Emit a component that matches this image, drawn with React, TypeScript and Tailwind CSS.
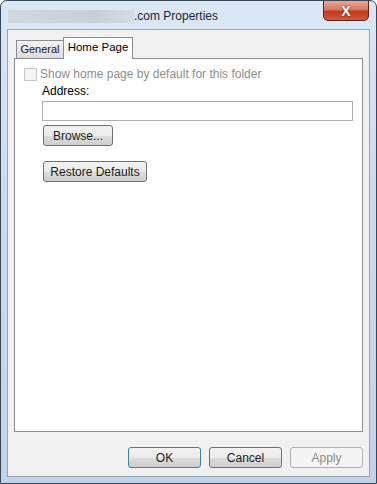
const font = { fontFamily: '"Liberation Sans", "Noto Sans", sans-serif' };

function Button({
  label,
  className,
  isDefault,
  disabled,
}: {
  label: string;
  className: string;
  isDefault?: boolean;
  disabled?: boolean;
}) {
  const border = disabled
    ? "border-[#adb2b5]"
    : isDefault
      ? "border-[#3c7fb1]"
      : "border-[#707070]";
  const fill = disabled
    ? "bg-[#f4f4f4] text-[#8d8d8d]"
    : "bg-[linear-gradient(#f2f2f2_0%,#ebebeb_50%,#dddddd_51%,#cfcfcf_100%)] text-[#1b1b1b]";
  return (
    <div
      className={`flex items-center justify-center rounded-[3px] border text-[12px] leading-none ${border} ${fill} ${className}`}
    >
      {label}
    </div>
  );
}

function Tabs() {
  return (
    <div className="flex h-[28px] items-end pl-[2px]">
      <div className="flex h-[18px] w-[47px] items-center justify-center border border-b-0 border-r-0 border-[#898c95] bg-[linear-gradient(#f2f2f2,#dcdcdc)] text-[11px] text-[#1b1b1b]">
        General
      </div>
      <div className="relative z-10 -mb-px flex h-[22px] w-[70px] items-center justify-center border border-b-0 border-[#898c95] bg-white pb-[2px] text-[11.5px] text-black">
        Home Page
      </div>
    </div>
  );
}

function HomePagePanel() {
  return (
    <div className="h-[374px] border border-[#898c95] bg-white pl-[9px] pt-[8px]">
      <div className="flex items-center gap-[3px] leading-[15px]">
        <div className="h-[13px] w-[13px] border border-[#c5c8cc] bg-[#f4f4f4]" />
        <span className="text-[12px] text-[#8d8d8d]">
          Show home page by default for this folder
        </span>
      </div>
      <div className="pl-[18px]">
        <div className="mt-[2px] text-[12px] leading-[15px] text-black">Address:</div>
        <div className="mt-[2px] h-[20px] w-[311px] border border-[#abadb3] bg-white" />
        <Button label="Browse..." className="mt-[4px] ml-px h-[21px] w-[70px]" />
        <Button label="Restore Defaults" className="mt-[15px] ml-px h-[21px] w-[104px]" />
      </div>
    </div>
  );
}

export default function App() {
  return (
    <div
      style={font}
      className="relative h-[484px] w-[377px] overflow-hidden rounded-t-[7px] border border-[#3a4655] bg-[linear-gradient(#dbe7f4,#c9dcef_40%,#bfd4ea)]"
    >
      <div className="flex h-[28px] items-center pl-[7px] pt-[2px]">
        <div className="h-[13px] w-[126px] bg-[linear-gradient(90deg,#d0d8df,#c7d0d8_70%,#d6dde4)]" />
        <span className="text-[12px] text-[#1e2630]">.com Properties</span>
      </div>
      <div className="absolute right-[7px] top-[-1px] flex h-[21px] w-[46px] items-center justify-center rounded-b-[5px] border border-[#5a2418] bg-[linear-gradient(#e8a999,#d9785f_45%,#c23a1f_55%,#d4583a)]">
        <span className="text-[14px] font-bold leading-none text-white [text-shadow:0_0_2px_#3a1208]">
          X
        </span>
      </div>
      <div className="mx-[6px] h-[448px] border border-[#97a6b6] bg-[#f0f0f0] px-[6px]">
        <Tabs />
        <HomePagePanel />
        <div className="mt-[15px] flex justify-end gap-[8px]">
          <Button label="OK" isDefault className="h-[21px] w-[73px]" />
          <Button label="Cancel" className="h-[21px] w-[73px]" />
          <Button label="Apply" disabled className="h-[21px] w-[73px]" />
        </div>
      </div>
    </div>
  );
}
